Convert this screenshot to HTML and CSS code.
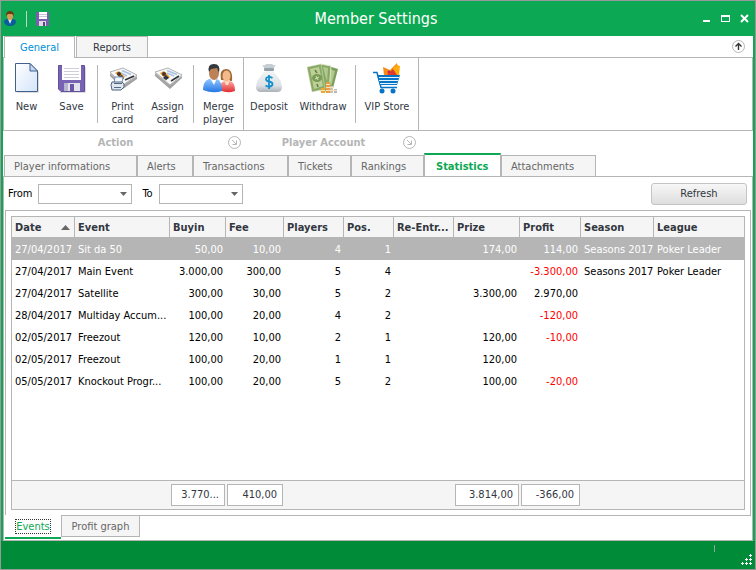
FILE: index.html
```
<!DOCTYPE html>
<html lang="en">
<head>
    <meta charset="UTF-8">
    <meta name="viewport" content="width=device-width, initial-scale=1.0">
    <title>Member Settings</title>
    <link rel="stylesheet" href="styles.css">
</head>
<body>
    <div class="window">
        <header class="titlebar">
            <div class="quick-access">
                <svg width="14" height="16" viewBox="0 0 14 16">
                    <path d="M1 11Q1 8 5 8H9Q13 8 13 11Q12 15 7 15Q2 15 1 11Z" fill="#0b5c9e"/>
                    <path d="M5 8L7 13L9 8Z" fill="#e8f1dd"/>
                    <ellipse cx="7" cy="5" rx="3" ry="4" fill="#d99a55"/>
                    <path d="M3 5Q3 0 7 0Q11 0 11 5L9 3H5Z" fill="#6b3c14"/>
                </svg>
                <span class="quick-separator"></span>
                <button type="button" class="quick-button" aria-label="Save">
                    <svg width="13" height="14" viewBox="0 0 13 14">
                        <path d="M0 0H13V14H1L0 13Z" fill="#7a5fb0"/>
                        <rect x="3" y="0" width="8" height="7" fill="#fff"/>
                        <path d="M3 2.5H11M3 4.5H11" stroke="#c9c9d4"/>
                        <rect x="3" y="9" width="7" height="5" fill="#ddd"/>
                        <rect x="7" y="10" width="2" height="4" fill="#5b4391"/>
                    </svg>
                </button>
            </div>
            <h1>Member Settings</h1>
            <div class="window-buttons">
                <button type="button" aria-label="Minimize"><svg width="9" height="9"><path d="M1 7H8" stroke="#fff" stroke-width="2"/></svg></button>
                <button type="button" aria-label="Maximize"><svg width="9" height="9"><path d="M0 2H9M.5 1V8M8.5 1V8M0 7.5H9" stroke="#fff"/><path d="M0 2H9" stroke="#fff" stroke-width="2"/></svg></button>
                <button type="button" aria-label="Close"><svg width="9" height="9"><path d="M1 1L8 8M8 1L1 8" stroke="#fff" stroke-width="2"/></svg></button>
            </div>
        </header>

        <main class="client">
            <nav class="ribbon-tabs">
                <button type="button" class="ribbon-tab selected">General</button>
                <button type="button" class="ribbon-tab">Reports</button>
                <button type="button" class="collapse" aria-label="Collapse ribbon">
                    <svg width="13" height="13" viewBox="0 0 13 13" fill="none">
                        <circle cx="6.5" cy="6.5" r="6" stroke="#b5b5b5"/>
                        <path d="M6.5 10V4M3.5 6.5L6.5 3.5L9.5 6.5" stroke="#333" stroke-width="1.4"/>
                    </svg>
                </button>
            </nav>

            <div class="ribbon">
                <section class="group">
                    <div class="group-items">
                        <button type="button" class="tool">
                            <svg width="32" height="32" viewBox="0 0 32 32">
                                <defs><linearGradient id="paper" x2="1" y2="1"><stop stop-color="#fff"/><stop offset="1" stop-color="#d3e4fa"/></linearGradient></defs>
                                <path d="M6 30.5H27.500V10" fill="none" stroke="#ddd"/>
                                <path d="M4.500 1.500H19L26.500 9V29.500H4.500Z" fill="url(#paper)" stroke="#42608a"/>
                                <path d="M19 1.500V9H26.500Z" fill="#c3d9f4" stroke="#42608a"/>
                            </svg>
                            New
                        </button>
                        <button type="button" class="tool">
                            <svg width="32" height="32" viewBox="0 0 32 32">
                                <path d="M4 30.500H29.500V5" fill="none" stroke="#ddd"/>
                                <path d="M2.500 3.500H28.500V29.500H5L2.500 27Z" fill="#7862b3" stroke="#62509c"/>
                                <rect x="6" y="3" width="19" height="15" fill="#fff"/>
                                <path d="M8 6.500H23M8 9.500H23M8 12.500H23M8 15.500H23" stroke="#cfcfdc"/>
                                <rect x="8" y="21" width="16" height="8" fill="#e3e3ee"/>
                                <rect x="8" y="21" width="4" height="8" fill="#b9b5cf"/>
                                <rect x="14" y="22" width="4" height="7" fill="#6a54a5"/>
                            </svg>
                            Save
                        </button>
                        <span class="separator"></span>
                        <button type="button" class="tool">
                            <svg width="32" height="32" viewBox="0 0 32 32">
                                <path d="M3 11L16 23L30 14V17L16 27L3 14Z" fill="#a3a3a3"/>
                                <path d="M3 10L16 6L30 13L16 23Z" fill="#f7f9fb" stroke="#b0b0b0"/>
                                <path d="M15 8.500L24 12.500M14 11L20 14" stroke="#a9c1e2" stroke-width="1.500"/>
                                <path d="M18 18L27 14" stroke="#333" stroke-width="1.500"/>
                                <path d="M8 11L12 9L18 15L15 17Z" fill="#ef9b27"/>
                                <circle cx="12" cy="12" r="2" fill="#43342c"/>
                                <path d="M11 15L15 13L17 17Z" fill="#263546"/>
                                <path d="M8 15H16L15 21H7Z" fill="#f4f8fd" stroke="#7390b3"/>
                                <path d="M5 20H15L17 22V25L14 28H5L4 23Z" fill="#dfe6ed" stroke="#4d6580"/>
                                <path d="M7 21.500H15M7 25.500H14" stroke="#526a82"/>
                            </svg>
                            Print<br>card
                        </button>
                        <button type="button" class="tool">
                            <svg width="32" height="32" viewBox="0 0 32 32">
                                <path d="M3 11L18 23L30 14V16L18 27L3 14Z" fill="#a3a3a3"/>
                                <path d="M3 10L16 6L30 13L18 23Z" fill="#f7f9fb" stroke="#b0b0b0"/>
                                <path d="M15 8.500L25 12.500M15 11L22 14" stroke="#a9c1e2" stroke-width="1.500"/>
                                <path d="M19 19L27 14" stroke="#333" stroke-width="1.500"/>
                                <path d="M8 11L12 9L18 15L14 18Z" fill="#ef9b27"/>
                                <circle cx="12" cy="12" r="2" fill="#43342c"/>
                                <path d="M11 16L14 13L17 16L14 18Z" fill="#263546"/>
                                <path d="M5 12L14 19" stroke="#bbb"/>
                            </svg>
                            Assign<br>card
                        </button>
                        <span class="separator"></span>
                        <button type="button" class="tool">
                            <svg width="32" height="32" viewBox="0 0 32 32">
                                <defs>
                                    <linearGradient id="blueShirt" x2="0" y2="1"><stop stop-color="#8fc5ff"/><stop offset="1" stop-color="#2477e4"/></linearGradient>
                                    <linearGradient id="redShirt" x2="0" y2="1"><stop stop-color="#ffaaa2"/><stop offset="1" stop-color="#df2c30"/></linearGradient>
                                </defs>
                                <path d="M17 28Q16 20 22 19H27Q32 20 32 29Q24 32 17 28Z" fill="url(#redShirt)"/>
                                <path d="M18 18Q16 7 23 7Q30 7 29 19Z" fill="#9b6a35"/>
                                <path d="M21 18H27L25 23H23Z" fill="#ffe0c0"/>
                                <ellipse cx="23.500" cy="14" rx="4" ry="5.500" fill="#f4ba89"/>
                                <path d="M0 28Q0 19 6 17H14Q19 19 19 29Q10 32 0 28Z" fill="url(#blueShirt)"/>
                                <path d="M7 16H14L11 23Z" fill="#fff"/>
                                <ellipse cx="11" cy="11" rx="5" ry="7" fill="#bd8157"/>
                                <path d="M6 10Q4 2 11 2Q18 2 16 11L14 6L8 7Z" fill="#34383b"/>
                            </svg>
                            Merge<br>player
                        </button>
                    </div>
                    <div class="group-caption">
                        <span>Action</span>
                        <button type="button" aria-label="Action options">
                            <svg width="13" height="13" viewBox="0 0 13 13" fill="none" stroke="#b5b5b5"><circle cx="6.5" cy="6.5" r="6"/><path d="M4 4L8 8M4.500 8.500H8.500V4.500"/></svg>
                        </button>
                    </div>
                </section>
                <section class="group">
                    <div class="group-items">
                        <button type="button" class="tool medium">
                            <svg width="32" height="32" viewBox="0 0 32 32">
                                <defs><linearGradient id="bag" x2="0" y2="1"><stop stop-color="#f2f4f5"/><stop offset=".7" stop-color="#dde1e5"/><stop offset="1" stop-color="#a9b0b6"/></linearGradient></defs>
                                <path d="M12 9H20Q29 18 29 25Q29 30 24 30H8Q3 30 3 25Q3 18 12 9Z" fill="url(#bag)"/>
                                <path d="M9 3Q12 4 13 2H19Q21 4 23 3L20 7H12Z" fill="#c6ced3"/>
                                <rect x="11" y="6" width="10" height="3" rx="1" fill="#94a2a9"/>
                                <path d="M19.500 16Q17 14.500 15 15Q13 15.500 13 17Q13 19 16 19.500Q19.500 20 19.500 22Q19.500 24 17 24.500Q15 25 12.500 23.500M16 13V27" fill="none" stroke="#168fce" stroke-width="1.800"/>
                            </svg>
                            Deposit
                        </button>
                        <button type="button" class="tool wide">
                            <svg width="32" height="32" viewBox="0 0 32 32">
                                <path d="M18 3L31 7L25 30H16Z" fill="#7a9f5c"/>
                                <path d="M20 6L28 9L24 25" fill="#b3c98b"/>
                                <path d="M13 2L24 4L22 29H13Z" fill="#86a867" stroke="#dfe8c8"/>
                                <path d="M16 5L21 6L20 20" fill="#b3c98b"/>
                                <path d="M0 5L14 2L18 27L5 30Z" fill="#8aab68" stroke="#dfe8c8" stroke-width=".5"/>
                                <path d="M3 7L12 5L16 24L7 27Z" fill="#bdcf96"/>
                                <ellipse cx="10" cy="16" rx="5" ry="4" fill="#799b54"/>
                                <path d="M8 17L12 15M9 14L11 18" stroke="#d8e4b8"/>
                                <path d="M8 8L10 11M10 22L11 25" stroke="#5d8246" stroke-width="1.500"/>
                                <path d="M14 26H18V31H14Z" fill="#efa632"/>
                                <path d="M19 20H23V31H19Z" fill="#e99e43"/>
                                <path d="M23 24H26V31H23Z" fill="#c9c2b4"/>
                                <path d="M27 27H30V31H27Z" fill="#b9b9b9"/>
                                <path d="M14 28.500H18M19 22.500H23M19 25.500H26M19 28.500H30" stroke="#f8e1b3"/>
                            </svg>
                            Withdraw
                        </button>
                        <span class="separator"></span>
                        <button type="button" class="tool wide">
                            <svg width="32" height="32" viewBox="0 0 32 32">
                                <path d="M12 5L19 8L26 1L28 13H13Z" fill="#f58b16"/>
                                <path d="M22 6L26 3L29 4L28 13H21Z" fill="#ffab0c"/>
                                <circle cx="18" cy="10" r="1.500" fill="#cb1c62"/>
                                <path d="M16 13L22 7L26 13Z" fill="#dc3b2d"/>
                                <path d="M2 10.500H6L10 25.500H26" fill="none" stroke="#0874c5" stroke-width="1.500"/>
                                <path d="M6 13H29L26 23H9Z" fill="#0874c5"/>
                                <path d="M8 15.500H28M8 18.500H27M9 21.500H26" stroke="#e5f3fb"/>
                                <circle cx="11" cy="29" r="2.500" fill="#0874c5"/>
                                <circle cx="22" cy="29" r="2.500" fill="#0874c5"/>
                            </svg>
                            VIP Store
                        </button>
                    </div>
                    <div class="group-caption">
                        <span>Player Account</span>
                        <button type="button" aria-label="Player Account options">
                            <svg width="13" height="13" viewBox="0 0 13 13" fill="none" stroke="#b5b5b5"><circle cx="6.5" cy="6.5" r="6"/><path d="M4 4L8 8M4.500 8.500H8.500V4.500"/></svg>
                        </button>
                    </div>
                </section>
                <div class="ribbon-rest"></div>
            </div>

            <nav class="tabs">
                <button type="button" class="tab w-xl">Player informations</button>
                <button type="button" class="tab w-xs">Alerts</button>
                <button type="button" class="tab w-lg">Transactions</button>
                <button type="button" class="tab w-sm">Tickets</button>
                <button type="button" class="tab w-md">Rankings</button>
                <button type="button" class="tab selected">Statistics</button>
                <button type="button" class="tab w-lg">Attachments</button>
            </nav>

            <div class="page">
                <form class="filter">
                    <label for="from">From</label>
                    <select id="from" class="from"><option></option></select>
                    <label for="to">To</label>
                    <select id="to" class="to"><option></option></select>
                    <button type="button" class="refresh">Refresh</button>
                </form>

                <div class="panel">
                    <div class="grid">
                        <table class="data">
                            <colgroup>
                                <col class="c-date"><col class="c-event"><col class="c-buyin"><col class="c-fee"><col class="c-players"><col class="c-pos"><col class="c-entries"><col class="c-prize"><col class="c-profit"><col class="c-season"><col>
                            </colgroup>
                            <thead>
                                <tr><th class="sorted">Date</th><th>Event</th><th>Buyin</th><th>Fee</th><th>Players</th><th>Pos.</th><th>Re-Entr...</th><th>Prize</th><th>Profit</th><th>Season</th><th>League</th></tr>
                            </thead>
                            <tbody>
                                <tr class="selected"><td>27/04/2017</td><td>Sit da 50</td><td class="num">50,00</td><td class="num">10,00</td><td class="num">4</td><td class="num">1</td><td></td><td class="num">174,00</td><td class="num">114,00</td><td>Seasons 2017</td><td>Poker Leader</td></tr>
                                <tr><td>27/04/2017</td><td>Main Event</td><td class="num">3.000,00</td><td class="num">300,00</td><td class="num">5</td><td class="num">4</td><td></td><td></td><td class="num loss">-3.300,00</td><td>Seasons 2017</td><td>Poker Leader</td></tr>
                                <tr><td>27/04/2017</td><td>Satellite</td><td class="num">300,00</td><td class="num">30,00</td><td class="num">5</td><td class="num">2</td><td></td><td class="num">3.300,00</td><td class="num">2.970,00</td><td></td><td></td></tr>
                                <tr><td>28/04/2017</td><td>Multiday Accum...</td><td class="num">100,00</td><td class="num">20,00</td><td class="num">4</td><td class="num">2</td><td></td><td></td><td class="num loss">-120,00</td><td></td><td></td></tr>
                                <tr><td>02/05/2017</td><td>Freezout</td><td class="num">120,00</td><td class="num">10,00</td><td class="num">2</td><td class="num">1</td><td></td><td class="num">120,00</td><td class="num loss">-10,00</td><td></td><td></td></tr>
                                <tr><td>02/05/2017</td><td>Freezout</td><td class="num">100,00</td><td class="num">20,00</td><td class="num">1</td><td class="num">1</td><td></td><td class="num">120,00</td><td></td><td></td><td></td></tr>
                                <tr><td>05/05/2017</td><td>Knockout Progr...</td><td class="num">100,00</td><td class="num">20,00</td><td class="num">5</td><td class="num">2</td><td></td><td class="num">100,00</td><td class="num loss">-20,00</td><td></td><td></td></tr>
                            </tbody>
                        </table>
                        <table class="summary">
                            <colgroup>
                                <col class="c-date"><col class="c-event"><col class="c-buyin"><col class="c-fee"><col class="c-players"><col class="c-pos"><col class="c-entries"><col class="c-prize"><col class="c-profit"><col class="c-season"><col>
                            </colgroup>
                            <tbody>
                                <tr><td></td><td></td><td><div class="total">3.770...</div></td><td><div class="total">410,00</div></td><td></td><td></td><td></td><td><div class="total">3.814,00</div></td><td><div class="total">-366,00</div></td><td></td><td></td></tr>
                            </tbody>
                        </table>
                    </div>
                </div>

                <nav class="bottom-tabs">
                    <button type="button" class="bottom-tab selected"><span>Events</span></button>
                    <button type="button" class="bottom-tab">Profit graph</button>
                </nav>
            </div>
        </main>

        <footer class="statusbar">
            <span class="tick"></span>
            <svg width="11" height="11" viewBox="0 0 11 11">
                <path d="M8 1.500H11M9.500 0V3M4 5.500H7M5.500 4V7M8 5.500H11M9.500 4V7M0 9.500H3M1.500 8V11M4 9.500H7M5.500 8V11M8 9.500H11M9.500 8V11" stroke="#fff"/>
            </svg>
        </footer>
    </div>
</body>
</html>
```

FILE: styles.css
```
* {
    box-sizing: border-box;
}

body {
    margin: 0;
    font-family: "DejaVu Sans Condensed", "DejaVu Sans", sans-serif;
    font-size: 11px;
    line-height: 13px;
    color: #000;
}

button,
select {
    margin: 0;
    padding: 0;
    border: none;
    background: none;
    font: inherit;
    color: inherit;
}

svg {
    display: block;
}

.window {
    display: flex;
    flex-direction: column;
    min-height: 100vh;
    border: 1px solid #999;
    background-color: #0da853;
}

/* Title bar */
.titlebar {
    display: grid;
    grid-template-columns: 1fr auto 1fr;
    height: 35px;
    padding: 0 6px 0 2px;
    align-items: center;
    color: #fff;
}

.titlebar h1 {
    margin: 0;
    font-size: 16px;
    font-weight: normal;
    line-height: 20px;
}

.quick-access {
    display: flex;
    align-items: center;
    gap: 9px;
}

.quick-separator {
    width: 1px;
    height: 16px;
    background-color: #b9d9c5;
}

.window-buttons {
    display: flex;
    justify-content: flex-end;
    gap: 10px;
}

/* Ribbon */
.client {
    flex: 1;
    display: flex;
    flex-direction: column;
    margin: 0 2px;
    background-color: #fff;
}

.ribbon-tabs {
    display: flex;
    height: 22px;
    padding-left: 1px;
    border-bottom: 1px solid #b5b5b5;
}

.ribbon-tab {
    width: 72px;
    height: 21px;
    border: 1px solid #b5b5b5;
    border-bottom: none;
    background-color: #f5f5f5;
    color: #32373f;
}

.ribbon-tab + .ribbon-tab {
    margin-left: 1px;
}

.ribbon-tab.selected {
    width: 71px;
    height: 22px;
    background-color: #fff;
    color: #0090d9;
}

.collapse {
    margin-left: auto;
    padding-right: 8px;
}

.ribbon {
    display: flex;
}

.group-items {
    display: flex;
    height: 73px;
    padding: 4px 2px 0 0;
    border-right: 1px solid #b5b5b5;
    border-bottom: 1px solid #b5b5b5;
}

.group:first-child .group-items {
    border-left: 1px solid #b5b5b5;
}

.ribbon-rest {
    flex: 1;
    height: 73px;
    border-right: 1px solid #b5b5b5;
    border-bottom: 1px solid #b5b5b5;
}

.tool {
    display: flex;
    flex-direction: column;
    align-items: center;
    width: 45px;
    gap: 6px;
    color: #32373f;
}

.tool.medium {
    width: 50px;
}

.tool.wide {
    width: 58px;
}

.separator {
    width: 1px;
    height: 58px;
    margin: 3px 2px 0 3px;
    background-color: #b5b5b5;
}

.group-caption {
    display: flex;
    align-items: center;
    height: 22px;
    padding-right: 3px;
    font-weight: bold;
    color: #b5b5b5;
}

.group-caption span {
    flex: 1;
    text-align: center;
}

/* Page tabs */
.tabs {
    display: flex;
    align-items: flex-end;
    height: 23px;
    padding-left: 1px;
}

.tab {
    height: 21px;
    padding-left: 9px;
    border: 1px solid #b5b5b5;
    border-bottom: none;
    background-color: #f5f5f5;
    text-align: left;
    white-space: nowrap;
    color: #666;
}

.tab.selected {
    width: 77px;
    height: 24px;
    margin-bottom: -1px;
    padding-left: 11px;
    border-top: 2px solid #0da853;
    background-color: #fff;
    font-weight: bold;
    color: #0da853;
}

.w-xs { width: 56px; }
.w-sm { width: 63px; }
.w-md { width: 73px; }
.w-lg { width: 95px; }
.w-xl { width: 133px; }

.page {
    flex: 1;
    display: flex;
    flex-direction: column;
    border: 1px solid #b5b5b5;
}

.filter {
    display: flex;
    align-items: center;
    height: 33px;
    padding: 0 5px 0 4px;
}

.filter select {
    height: 20px;
    margin: 0 10px 0 6px;
    border: 1px solid #b5b5b5;
    border-radius: 0;
    appearance: none;
    background: #fff url("data:image/svg+xml,%3Csvg xmlns='http://www.w3.org/2000/svg' width='7' height='4'%3E%3Cpath d='M0 0H7L3.5 4Z' fill='%23666'/%3E%3C/svg%3E") no-repeat right 4px center;
}

.from {
    width: 94px;
}

.to {
    width: 84px;
}

.refresh {
    width: 96px;
    height: 22px;
    margin-left: auto;
    border: 1px solid #c4c4c4;
    border-radius: 3px;
    background: linear-gradient(#f7f7f7, #dedede);
    color: #32373f;
}

/* Grid */
.panel {
    flex: 1;
    display: flex;
    margin: 0 1px;
    padding: 5px;
    border: 1px solid #b5b5b5;
}

.grid {
    flex: 1;
    display: flex;
    flex-direction: column;
    justify-content: space-between;
    border: 1px solid #b5b5b5;
}

table {
    width: 100%;
    border-collapse: separate;
    border-spacing: 0;
    table-layout: fixed;
}

.c-date { width: 63px; }
.c-event { width: 95px; }
.c-buyin { width: 56px; }
.c-fee { width: 58px; }
.c-players { width: 60px; }
.c-pos { width: 50px; }
.c-entries { width: 60px; }
.c-prize { width: 66px; }
.c-profit { width: 61px; }
.c-season { width: 73px; }

th,
td {
    height: 22px;
    padding: 0 0 0 3px;
    overflow: hidden;
    text-overflow: ellipsis;
    white-space: nowrap;
}

th {
    height: 21px;
    border-right: 1px solid #b5b5b5;
    border-bottom: 1px solid #b5b5b5;
    background-color: #f5f5f5;
    text-align: left;
    color: #32373f;
}

th:last-child {
    border-right: none;
}

th.sorted {
    background: #f5f5f5 url("data:image/svg+xml,%3Csvg xmlns='http://www.w3.org/2000/svg' width='9' height='5'%3E%3Cpath d='M0 5H9L4.5 0Z' fill='%23666'/%3E%3C/svg%3E") no-repeat right 4px center;
}

td.num {
    padding-right: 3px;
    text-align: right;
}

.loss {
    color: #f00;
}

tr.selected td {
    background-color: #b5b5b5;
    color: #fff;
}

.summary {
    border-top: 1px solid #b5b5b5;
    background-color: #f5f5f5;
}

.summary td {
    height: 28px;
    padding: 0 1px;
}

.total {
    height: 22px;
    padding: 0 5px;
    border: 1px solid #b5b5b5;
    background-color: #fff;
    line-height: 20px;
    text-align: right;
    color: #32373f;
}

/* Bottom tabs */
.bottom-tabs {
    display: flex;
    height: 24px;
    padding-left: 1px;
}

.bottom-tab {
    width: 79px;
    height: 22px;
    margin-top: -1px;
    border: 1px solid #b5b5b5;
    background-color: #f5f5f5;
    color: #666;
}

.bottom-tab.selected {
    width: 56px;
    height: 24px;
    border: none;
    border-bottom: 2px solid #0da853;
    background-color: #fff;
    color: #0da853;
}

.bottom-tab.selected span {
    outline: 1px dotted #333;
}

.statusbar {
    display: flex;
    justify-content: flex-end;
    align-items: flex-end;
    gap: 26px;
    height: 28px;
    padding: 0 3px 4px 0;
    background-color: #008b38;
}

.tick {
    align-self: flex-start;
    width: 1px;
    height: 7px;
    margin-top: 4px;
    background-color: #8aa894;
}
```
